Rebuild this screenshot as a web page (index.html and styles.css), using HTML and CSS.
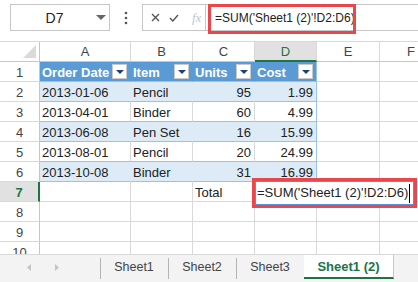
FILE: index.html
```html
<!DOCTYPE html>
<html lang="en">
<head>
  <meta charset="UTF-8" />
  <title>Sheet1 (2)</title>
  <link rel="stylesheet" href="styles.css">
</head>
<body>
  <!-- NAME BOX + FORMULA BAR -->
  <div class="topbar">
    <div class="namebox">
      <span class="ref">D7</span>
      <svg class="nb-arrow" width="10" height="5" viewBox="0 0 10 5"><path d="M0 0H10L5 5Z" fill="#666"/></svg>
    </div>
    <div class="dots">
      <svg width="4" height="14" viewBox="0 0 4 14"><circle cx="2" cy="2" r="1.3" fill="#555"/><circle cx="2" cy="7" r="1.3" fill="#555"/><circle cx="2" cy="12" r="1.3" fill="#555"/></svg>
    </div>
    <div class="fbar">
      <div class="fbtns">
        <svg width="9" height="9" viewBox="0 0 9 9"><path d="M1 1L8 8M8 1L1 8" stroke="#555" stroke-width="1.4"/></svg>
        <svg width="10" height="8" viewBox="0 0 10 8"><path d="M1 4L3.8 7L9 1" stroke="#555" stroke-width="1.4" fill="none"/></svg>
        <span class="fx">fx</span>
      </div>
      <div class="ftext">
        =SUM('Sheet1 (2)'!D2:D6)
        <div class="mark mark-fbar"></div>
      </div>
    </div>
  </div>

  <!-- WORKSHEET -->
  <div class="sheet">
    <div class="grid">
      <div class="corner"><span class="tri"></span></div>
      <div class="colh">A</div>
      <div class="colh">B</div>
      <div class="colh">C</div>
      <div class="colh active">D</div>
      <div class="colh">E</div>
      <div class="colh">F</div>

      <div class="rh">1</div>
      <div class="cell th">Order Date<span class="dd"></span></div>
      <div class="cell th">Item<span class="dd"></span></div>
      <div class="cell th">Units<span class="dd"></span></div>
      <div class="cell th edge">Cost<span class="dd"></span></div>
      <div class="cell"></div>
      <div class="cell"></div>

      <div class="rh">2</div>
      <div class="cell band">2013-01-06</div>
      <div class="cell band">Pencil</div>
      <div class="cell band num">95</div>
      <div class="cell band num edge">1.99</div>
      <div class="cell"></div>
      <div class="cell"></div>

      <div class="rh">3</div>
      <div class="cell row">2013-04-01</div>
      <div class="cell row">Binder</div>
      <div class="cell row num">60</div>
      <div class="cell row num edge">4.99</div>
      <div class="cell"></div>
      <div class="cell"></div>

      <div class="rh">4</div>
      <div class="cell band">2013-06-08</div>
      <div class="cell band">Pen Set</div>
      <div class="cell band num">16</div>
      <div class="cell band num edge">15.99</div>
      <div class="cell"></div>
      <div class="cell"></div>

      <div class="rh">5</div>
      <div class="cell row">2013-08-01</div>
      <div class="cell row">Pencil</div>
      <div class="cell row num">20</div>
      <div class="cell row num edge">24.99</div>
      <div class="cell"></div>
      <div class="cell"></div>

      <div class="rh">6</div>
      <div class="cell band">2013-10-08</div>
      <div class="cell band">Binder</div>
      <div class="cell band num">31</div>
      <div class="cell band num edge">16.99</div>
      <div class="cell"></div>
      <div class="cell"></div>

      <div class="rh active">7</div>
      <div class="cell"></div>
      <div class="cell"></div>
      <div class="cell">Total</div>
      <div class="cell"></div>
      <div class="cell"></div>
      <div class="cell"></div>

      <div class="rh">8</div>
      <div class="cell"></div><div class="cell"></div><div class="cell"></div>
      <div class="cell"></div><div class="cell"></div><div class="cell"></div>

      <div class="rh">9</div>
      <div class="cell"></div><div class="cell"></div><div class="cell"></div>
      <div class="cell"></div><div class="cell"></div><div class="cell"></div>

      <div class="rh">10</div>
      <div class="cell"></div><div class="cell"></div><div class="cell"></div>
      <div class="cell"></div><div class="cell"></div><div class="cell"></div>
    </div>

    <!-- in-cell editor for D7 -->
    <div class="mark mark-cell">
      <div class="editor">=SUM('Sheet1 (2)'!D2:D6)<span class="caret"></span></div>
    </div>
  </div>

  <!-- SHEET TABS -->
  <div class="tabs">
    <div class="nav">
      <svg width="4" height="7" viewBox="0 0 4 7"><path d="M4 0V7L0 3.5Z" fill="#c4c4c4"/></svg>
      <svg width="4" height="7" viewBox="0 0 4 7"><path d="M0 0V7L4 3.5Z" fill="#c4c4c4"/></svg>
    </div>
    <div class="tab">Sheet1</div>
    <div class="tab">Sheet2</div>
    <div class="tab">Sheet3</div>
    <div class="tab active">Sheet1 (2)</div>
  </div>
</body>
</html>
```

FILE: styles.css
```css
:root {
  --grid-line: #d9d9d9;
  --head-line: #c6c6c6;
  --table-blue: #5b9bd5;
  --band: #ddebf7;
  --band-line: #9bc2e6;
  --excel-green: #217346;
  --mark-red: #e9474c;
  --text: #222222;
  --muted: #444444;
  --font-family: "Liberation Sans", Arial, sans-serif;
}
* {
  margin: 0;
  padding: 0;
  box-sizing: border-box;
  font-family: var(--font-family);
}
body {
  width: 418px;
  height: 282px;
  overflow: hidden;
  background: #ffffff;
  color: var(--text);
}

/* Name box + formula bar */
.topbar {
  display: flex;
  align-items: flex-start;
  height: 41px;
  padding: 4px 0 0 10px;
}
.namebox {
  width: 100px;
  height: 27px;
  border: 1px solid var(--head-line);
  display: flex;
  align-items: center;
  padding-right: 2px;
}
.namebox .ref {
  flex: 1;
  text-align: center;
  font-size: 14px;
  padding-left: 2px;
}
.nb-arrow {
  margin-right: 1px;
}
.dots {
  width: 32px;
  height: 27px;
  display: flex;
  align-items: center;
  justify-content: center;
}
.fbar {
  flex: 1;
  height: 27px;
  display: flex;
  border: 1px solid var(--head-line);
  border-right: none;
}
.fbtns {
  width: 63px;
  display: flex;
  align-items: center;
  gap: 9px;
  padding-left: 8px;
  border-right: 1px solid var(--head-line);
}
.fx {
  font-family: "Liberation Serif", serif;
  font-style: italic;
  font-size: 13px;
  color: #b9c6da;
  margin-left: 4px;
}
.ftext {
  flex: 1;
  position: relative;
  padding-left: 9px;
  font-size: 12px;
  line-height: 27px;
  white-space: nowrap;
}

/* red annotation boxes */
.mark {
  position: absolute;
  border: 3px solid var(--mark-red);
}
.mark-fbar {
  left: 2px;
  top: -1px;
  width: 148px;
  height: 30px;
}
.mark-cell {
  left: 252px;
  top: 136px;
  width: 165px;
  height: 30px;
  background: #ffffff;
}
.editor {
  height: 100%;
  border: 1px solid #5b8fd6;
  padding-left: 1px;
  font-size: 13px;
  line-height: 22px;
  white-space: nowrap;
  position: relative;
}
.caret {
  display: inline-block;
  width: 1px;
  height: 19px;
  background: #000;
  vertical-align: middle;
  margin-left: 1px;
}

/* Worksheet */
.sheet {
  position: relative;
  height: 213px;
  overflow: hidden;
  border-top: 1px solid var(--grid-line);
}
.grid {
  display: grid;
  grid-template-columns: 40px 91px 62px 62px 62px 63px 63px;
  grid-auto-rows: 20px;
}
.corner {
  position: relative;
  border-right: 1px solid var(--head-line);
  border-bottom: 1px solid var(--head-line);
}
.tri {
  position: absolute;
  right: 3px;
  bottom: 3px;
  width: 0;
  height: 0;
  border-left: 13px solid transparent;
  border-bottom: 13px solid #dadada;
}
.colh {
  text-align: center;
  font-size: 13px;
  line-height: 20px;
  color: var(--muted);
  border-right: 1px solid var(--grid-line);
  border-bottom: 1px solid var(--head-line);
}
.colh.active {
  background: #e1e1e1;
  color: var(--excel-green);
  border-bottom: 2px solid var(--excel-green);
}
.rh {
  text-align: center;
  font-size: 13px;
  line-height: 21px;
  color: var(--muted);
  border-right: 1px solid var(--head-line);
  border-bottom: 1px solid var(--grid-line);
}
.rh.active {
  background: #e1e1e1;
  color: var(--excel-green);
  font-weight: bold;
  border-right: 2px solid var(--excel-green);
}
.cell {
  font-size: 13px;
  line-height: 21px;
  padding: 0 3px 0 2px;
  white-space: nowrap;
  overflow: hidden;
  border-right: 1px solid var(--grid-line);
  border-bottom: 1px solid var(--grid-line);
}
.num {
  text-align: right;
}

/* Table A1:D6 */
.th {
  position: relative;
  background: var(--table-blue);
  color: #ffffff;
  font-weight: bold;
  border-right-color: var(--table-blue);
  border-bottom-color: var(--band-line);
}
.dd {
  position: absolute;
  right: 3px;
  top: 2px;
  width: 15px;
  height: 15px;
  background: #ffffff;
  border: 1px solid #c9c9c9;
}
.dd::after {
  content: "";
  position: absolute;
  left: 3px;
  top: 5px;
  border-left: 4px solid transparent;
  border-right: 4px solid transparent;
  border-top: 4px solid #1f3f78;
}
.band {
  background: var(--band);
  border-right-color: var(--band);
  border-bottom-color: var(--band-line);
}
.row {
  border-bottom-color: var(--band-line);
}
.edge {
  border-right-color: var(--band-line);
}

/* Sheet tabs */
.tabs {
  height: 28px;
  display: flex;
  background: #f3f3f3;
  border-top: 1px solid var(--grid-line);
}
.nav {
  width: 100px;
  display: flex;
  align-items: center;
  gap: 24px;
  padding-left: 27px;
  padding-bottom: 2px;
}
.tab {
  position: relative;
  width: 68px;
  height: 24px;
  display: flex;
  align-items: center;
  justify-content: center;
  font-size: 12.5px;
  color: var(--muted);
}
.tab::before {
  content: "";
  position: absolute;
  left: 0;
  top: 3px;
  bottom: 0;
  width: 1px;
  background: #b4b4b4;
}
.tab:first-of-type {
  width: 67px;
}
.tab.active {
  width: 90px;
  background: #ffffff;
  color: var(--excel-green);
  font-weight: bold;
  font-size: 13px;
  border-bottom: 2px solid var(--excel-green);
  border-right: 1px solid var(--head-line);
}
.tab.active::before {
  display: none;
}
```
